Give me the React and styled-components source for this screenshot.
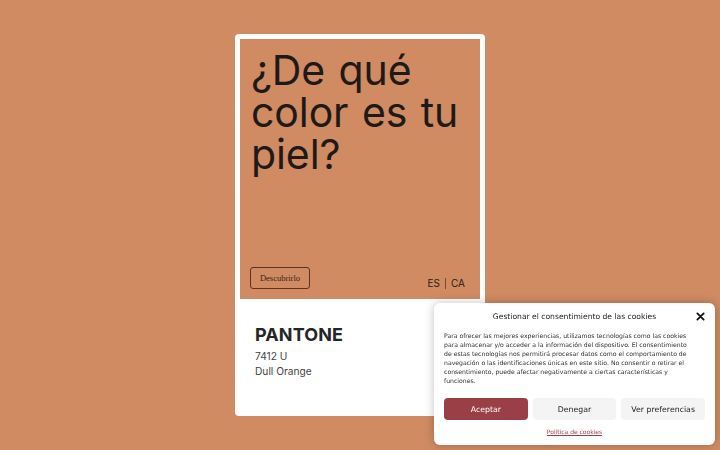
import styled, { createGlobalStyle } from "styled-components";

const Global = createGlobalStyle`
  html, body {
    margin: 0;
    padding: 0;
    background: #d08b62;
    height: 100%;
  }
  #root { min-height: 100%; }
`;

const Page = styled.div`
  display: flex;
  justify-content: center;
  padding-top: 34px;
  min-height: 450px;
  box-sizing: border-box;
  background: #d08b62;
`;

const Card = styled.div`
  width: 250px;
  height: 382px;
  box-sizing: border-box;
  background: #fff;
  border-radius: 4px;
  padding: 5px;
  display: flex;
  flex-direction: column;
`;

const Swatch = styled.div`
  height: 260px;
  background: ${(p) => p.color};
  box-sizing: border-box;
  padding: 10px 15px 10px 11px;
  display: flex;
  flex-direction: column;
  justify-content: space-between;
`;

const Title = styled.h1`
  margin: 0;
  font-family: "Inter", "Liberation Sans", sans-serif;
  font-weight: 400;
  font-size: 41px;
  line-height: 42px;
  word-spacing: 2px;
  letter-spacing: -0.1px;
  color: #1e1a17;
`;

const SwatchFoot = styled.div`
  display: flex;
  justify-content: space-between;
  align-items: flex-end;
`;

const Discover = styled.button`
  background: transparent;
  border: 1px solid #5a3322;
  border-radius: 3px;
  height: 22px;
  width: 60px;
  padding: 0;
  font-family: "Liberation Serif", "DejaVu Serif", serif;
  font-size: 8.5px;
  color: #3a2218;
  margin-left: -1px;
`;

const Lang = styled.div`
  font-family: "Inter", "Liberation Sans", sans-serif;
  font-size: 10px;
  color: #2a1c14;
  display: flex;
  gap: 5px;
  align-items: center;
  line-height: 12px;
`;

const Sep = styled.span`
  width: 1px;
  height: 11px;
  background: #7a4a33;
`;

const Info = styled.div`
  padding: 25px 15px 0;
  font-family: "Inter", "Liberation Sans", sans-serif;
  color: #2b2b2b;
`;

const Brand = styled.div`
  font-weight: 700;
  font-size: 18px;
  line-height: 22px;
  letter-spacing: 0.1px;
  color: #252525;
  margin-bottom: 3px;
`;

const Meta = styled.div`
  font-size: 10.2px;
  line-height: 15px;
  color: #444;
`;

const Cookie = styled.div`
  position: fixed;
  right: 5px;
  bottom: 5px;
  width: 281px;
  height: 142px;
  box-sizing: border-box;
  background: #fff;
  border-radius: 6px;
  box-shadow: 0 0 10px rgba(0, 0, 0, 0.25);
  padding: 7px 10px 0;
  font-family: "DejaVu Sans", "Noto Sans", sans-serif;
  display: flex;
  flex-direction: column;
`;

const CookieHead = styled.div`
  position: relative;
  text-align: center;
  font-size: 7.6px;
  color: #222;
  height: 12px;
  line-height: 14px;
`;

const Close = styled.span`
  position: absolute;
  right: 0;
  top: 2px;
  display: flex;
`;

const CookieText = styled.p`
  margin: 9px 0 0;
  font-size: 6.15px;
  line-height: 9px;
  color: #2e2e2e;
  width: 252px;
`;

const Buttons = styled.div`
  display: grid;
  grid-template-columns: repeat(3, 1fr);
  gap: 5px;
  margin-top: 13px;
`;

const Btn = styled.button`
  height: 22px;
  border: none;
  border-radius: 4px;
  padding: 0;
  font-family: "DejaVu Sans", "Noto Sans", sans-serif;
  font-size: 7.8px;
  background: ${(p) => (p.primary ? "#9b3f46" : "#f4f4f4")};
  color: ${(p) => (p.primary ? "#fff" : "#222")};
`;

const Policy = styled.a`
  align-self: center;
  margin-top: 8px;
  font-size: 6px;
  color: #9b3f46;
  text-decoration: underline;
`;

export default function App() {
  return (
    <>
      <Global />
      <Page>
        <Card>
          <Swatch color="#d08b62">
            <Title>
              ¿De qué
              <br />
              color es tu
              <br />
              piel?
            </Title>
            <SwatchFoot>
              <Discover>Descubrirlo</Discover>
              <Lang>
                <span>ES</span>
                <Sep />
                <span>CA</span>
              </Lang>
            </SwatchFoot>
          </Swatch>
          <Info>
            <Brand>PANTONE</Brand>
            <Meta>7412 U</Meta>
            <Meta>Dull Orange</Meta>
          </Info>
        </Card>
      </Page>
      <Cookie>
        <CookieHead>
          Gestionar el consentimiento de las cookies
          <Close>
            <svg width="9" height="9" viewBox="0 0 10 10">
              <path d="M1.5 1.5 L8.5 8.5 M8.5 1.5 L1.5 8.5" stroke="#111" strokeWidth="2" strokeLinecap="round" />
            </svg>
          </Close>
        </CookieHead>
        <CookieText>
          Para ofrecer las mejores experiencias, utilizamos tecnologías como las cookies para almacenar y/o acceder a la información del dispositivo. El consentimiento de estas tecnologías nos permitirá procesar datos como el comportamiento de navegación o las identificaciones únicas en este sitio. No consentir o retirar el consentimiento, puede afectar negativamente a ciertas características y funciones.
        </CookieText>
        <Buttons>
          <Btn primary>Aceptar</Btn>
          <Btn>Denegar</Btn>
          <Btn>Ver preferencias</Btn>
        </Buttons>
        <Policy href="#">Política de cookies</Policy>
      </Cookie>
    </>
  );
}
